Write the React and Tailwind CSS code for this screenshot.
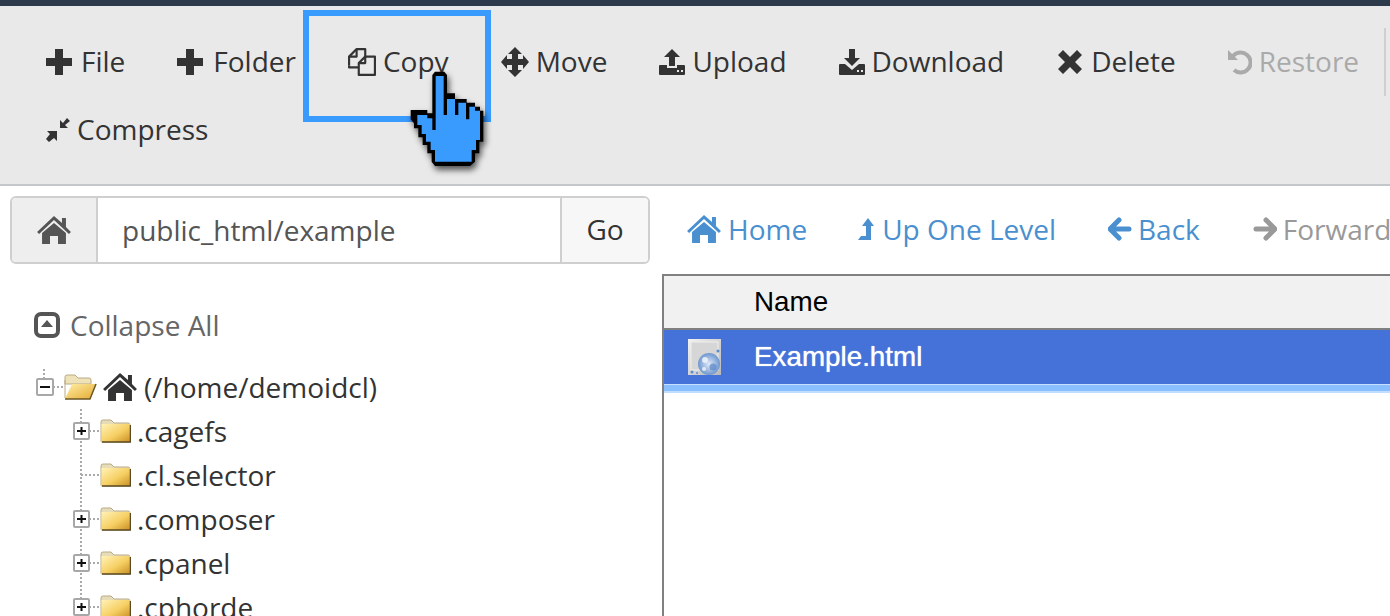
const Plus = () => (
  <svg width="26" height="26" viewBox="0 0 26 26" fill="#333"><path d="M9 0h8v9h9v8h-9v9H9v-9H0V9h9z" /></svg>
);

const Copy = () => (
  <svg width="28" height="28" viewBox="1 1 26 26" fill="none" stroke="#333" strokeWidth="2" strokeLinejoin="round">
    <path d="M2 17V9l7-7h8v7" />
    <path d="M9 2v7H2" />
    <path d="M2 17v2h9" />
    <path d="M11 26V15l6-6h9v17z" fill="#e9e9e9" />
    <path d="M17 9v6h-6" />
  </svg>
);

const Move = () => (
  <svg width="28" height="30" viewBox="0 0 28 30" fill="#333">
    <path d="M14 0L21 7H17V12H22V8L28 15L22 22V18H17V23H21L14 30L7 23H11V18H6V22L0 15L6 8V12H11V7H7Z" />
  </svg>
);

const Upload = () => (
  <svg width="26" height="26" viewBox="0 0 26 26" fill="#333">
    <path d="M13 0l8 8h-5v9h-6V8H5z" />
    <path d="M1 16h7v3h10v-3h7a1 1 0 0 1 1 1v8a1 1 0 0 1-1 1H1a1 1 0 0 1-1-1v-8a1 1 0 0 1 1-1z" />
    <rect x="18" y="21" width="2" height="2" fill="#e9e9e9" />
    <rect x="22" y="21" width="2" height="2" fill="#e9e9e9" />
  </svg>
);

const Download = () => (
  <svg width="26" height="26" viewBox="0 0 26 26" fill="#333">
    <path d="M10 0h6v9h5l-8 8-8-8h5z" />
    <path d="M1 15h5l7 6 7-6h5a1 1 0 0 1 1 1v9a1 1 0 0 1-1 1H1a1 1 0 0 1-1-1v-9a1 1 0 0 1 1-1z" />
    <rect x="18" y="21" width="2" height="2" fill="#e9e9e9" />
    <rect x="22" y="21" width="2" height="2" fill="#e9e9e9" />
  </svg>
);

const Times = () => (
  <svg width="24" height="24" viewBox="0 0 24 24" fill="#333">
    <path d="M5 0l7 7 7-7 5 5-7 7 7 7-5 5-7-7-7 7-5-5 7-7-7-7z" />
  </svg>
);

const Restore = () => (
  <svg width="24" height="26" viewBox="0 0 24 26" fill="none">
    <path d="M5 7a10 10 0 1 1 1 14" stroke="#aaa" strokeWidth="4" />
    <path d="M0 1l10 10H0z" fill="#aaa" />
  </svg>
);

const Compress = () => (
  <svg width="24" height="24" viewBox="0 0 24 24" fill="#333">
    <path d="M14 2v8h8l-3-3 5-4-3-3-4 5z" />
    <path d="M1 13h10v10l-3-3-5 4-3-3 4-5z" />
  </svg>
);

const Home = ({ color, w = 34 }) => (
  <svg width={w} height={w * 0.82} viewBox="0 0 34 28" fill={color} className="shrink-0">
    <path d="M17 0l8 7V2h4v9l5 5-2 2L17 4 2 18l-2-2z" />
    <path d="M5 17L17 7l12 10v11h-8v-8h-8v8H5z" />
  </svg>
);

const UpLevel = () => (
  <svg width="16" height="22" viewBox="0 0 16 22" fill="#4a90d0">
    <path d="M10 0L16 8H13V22H0L3 18H8V8H4Z" />
  </svg>
);

const Arrow = ({ color, flip }) => (
  <svg width="24" height="24" viewBox="0 0 24 24" fill="none" stroke={color} strokeWidth="5" strokeLinecap="round" strokeLinejoin="round">
    {flip ? <path d="M13 3l9 9-9 9M21 12H3" /> : <path d="M11 3l-9 9 9 9M3 12h18" />}
  </svg>
);

const Collapse = () => (
  <svg width="26" height="26" viewBox="0 0 26 26">
    <rect x="2" y="2" width="22" height="22" rx="5" fill="#fff" stroke="#555" strokeWidth="4" />
    <path d="M13 8l6 7H7z" fill="#555" />
  </svg>
);

const Folder = ({ id }) => (
  <svg width="31" height="24" viewBox="0 0 31 24" className="shrink-0">
    <defs>
      <linearGradient id={id} x1="0" y1="0" x2="1" y2="1">
        <stop offset="0" stopColor="#fff3b8" />
        <stop offset="0.55" stopColor="#f6cf62" />
        <stop offset="1" stopColor="#c98f25" />
      </linearGradient>
    </defs>
    <path d="M1 3q0-2 2-2h8l3 3h14q2 0 2 2v16q0 1-1 1H2q-1 0-1-1z" fill="#e7dcb8" stroke="#b9ab85" strokeWidth="1" />
    <rect x="1.5" y="5" width="28.5" height="18" fill={`url(#${id})`} />
    <path d="M2 23h28.5V6" fill="none" stroke="#5a4a25" strokeWidth="1.5" />
  </svg>
);

const OpenFolder = () => (
  <svg width="33" height="26" viewBox="0 0 33 26" className="shrink-0">
    <defs>
      <linearGradient id="openF" x1="0" y1="0" x2="1" y2="1">
        <stop offset="0" stopColor="#fff0a8" />
        <stop offset="1" stopColor="#e5a92f" />
      </linearGradient>
    </defs>
    <path d="M1 3q0-2 2-2h8l3 3h11q2 0 2 2v4H1z" fill="#efe2b8" stroke="#b9ab85" />
    <path d="M1 24V6" stroke="#b9ab85" />
    <path d="M8 10h24l-6 15H1z" fill="url(#openF)" />
    <path d="M1 25h25l6-15" fill="none" stroke="#6a5526" strokeWidth="1.5" />
  </svg>
);

// expander box plus the dotted tree lines for one 44px row
const Connector = ({ kind }) => (
  <svg width="27" height="44" viewBox="0 0 27 44" className="shrink-0">
    <path d={kind === "leaf" ? "M8 0V44M8 22H27" : "M8 0V44M16 22H27"} stroke="#aaa" strokeWidth="2" strokeDasharray="2 2" fill="none" />
    {kind !== "leaf" && (
      <g>
        <rect x="1" y="14" width="15" height="16" rx="1" fill="#fff" stroke="#a8a8a8" strokeWidth="2" />
        <path d="M4 22h9M8.5 18v8" stroke="#111" strokeWidth="2" />
      </g>
    )}
  </svg>
);

const FileIcon = () => (
  <svg width="35" height="36" viewBox="0 0 35 36" className="shrink-0">
    <defs>
      <linearGradient id="doc" x1="0" y1="0" x2="1" y2="1">
        <stop offset="0" stopColor="#f2f2f2" />
        <stop offset="1" stopColor="#b8b8b8" />
      </linearGradient>
      <radialGradient id="globe">
        <stop offset="0" stopColor="#dfe9f7" />
        <stop offset="1" stopColor="#6f97cf" />
      </radialGradient>
    </defs>
    <rect x="0" y="0" width="33" height="36" fill="url(#doc)" />
    <rect x="3" y="3" width="27" height="28" fill="#d6d6d6" stroke="#eee" />
    <circle cx="21" cy="25" r="11" fill="url(#globe)" />
    <circle cx="17" cy="21" r="3" fill="#f4f7fc" opacity="0.8" />
    <circle cx="25" cy="28" r="3.5" fill="#5b88c8" opacity="0.7" />
    <circle cx="16" cy="30" r="2" fill="#fff" opacity="0.7" />
    <circle cx="4" cy="33" r="1.5" fill="#5b8bd0" />
    <circle cx="9" cy="34" r="1" fill="#5b8bd0" />
    <circle cx="30" cy="12" r="1.5" fill="#5b8bd0" />
  </svg>
);

const Cursor = () => (
  <svg width="100" height="120" viewBox="0 0 300 360" className="drop-shadow-[2px_4px_3px_rgba(0,0,0,0.65)]">
    <path d="M97 45L105 35H133L141 45V100H165V117H200V128H225V140H240V152H250V245H238V280H225V305L210 318H105L95 305V280H82V255H68V232H55V205H42V190L32 178V150H82V160H97Z" fill="#000" />
    <path d="M107 48H131V165H141V117H165V165H175V128H198V178H208V140H225V152H240V240H228V270H215V305H105V270H92V245H78V222H65V195H52V165H82V175H97V210H107Z" fill="#3a9bff" />
  </svg>
);

const toolbarItems = [
  { label: "File", icon: <Plus />, cls: "gap-[9px]" },
  { label: "Folder", icon: <Plus />, cls: "gap-[10px]" },
  { label: "Copy", icon: <Copy />, cls: "gap-[7px]" },
  { label: "Move", icon: <Move />, cls: "gap-[7px]" },
  { label: "Upload", icon: <Upload />, cls: "gap-[7px]" },
  { label: "Download", icon: <Download />, cls: "gap-[7px]" },
  { label: "Delete", icon: <Times />, cls: "ml-[2px] gap-[9px]" },
  { label: "Restore", icon: <Restore />, cls: "gap-[7px] text-[#aaa]" },
];

const treeRows = [
  { name: ".cagefs", kind: "plus" },
  { name: ".cl.selector", kind: "leaf" },
  { name: ".composer", kind: "plus" },
  { name: ".cpanel", kind: "plus" },
  { name: ".cphorde", kind: "plus" },
];

export default function App() {
  return (
    <div className="relative h-[616px] w-[1390px] overflow-hidden bg-white font-['Open_Sans',sans-serif] text-[28px] text-[#333]">
      <div className="h-[6px] bg-[#2c3a4c]" />

      {/* Toolbar */}
      <div className="flex flex-wrap gap-x-[52px] border-b-2 border-[#c4c7c9] bg-[#e9e9e9] pb-[20px] pl-[46px] pt-[22px]">
        {toolbarItems.map((item) => (
          <div key={item.label} className={`flex h-[68px] items-center ${item.cls}`}>
            {item.icon}
            <span className="pb-[2px]">{item.label}</span>
          </div>
        ))}
        <div className="ml-[-27px] h-[68px] w-[2px] bg-[#cfcfcf]" />
        <div className="flex h-[68px] items-center gap-[7px]">
          <Compress />
          <span className="pb-[2px]">Compress</span>
        </div>
      </div>

      <div className="flex h-[430px]">
        {/* Left pane */}
        <div className="w-[662px] shrink-0 pl-[10px] pt-[10px]">
          <div className="flex h-[68px] w-[640px] overflow-hidden rounded-[6px] border-2 border-[#cfcfcf]">
            <div className="flex w-[86px] items-center justify-center border-r-2 border-[#cfcfcf] bg-[#eeeeee]">
              <Home color="#555" />
            </div>
            <div className="flex flex-1 items-center pl-[24px] text-[#555]">public_html/example</div>
            <div className="flex w-[88px] items-center justify-center border-l-2 border-[#cfcfcf] bg-[#f7f7f7] pb-[2px]">Go</div>
          </div>

          <div className="mt-[40px] flex items-center gap-[10px] pl-[24px] text-[#666]">
            <Collapse />
            <span>Collapse All</span>
          </div>

          <div className="mt-[19px] flex h-[44px] items-center pl-[26px]">
            <svg width="28" height="44" viewBox="0 0 28 44" className="shrink-0">
              <path d="M8 4V14M17 22H27" stroke="#aaa" strokeWidth="2" strokeDasharray="2 2" />
              <rect x="1" y="14" width="16" height="16" rx="1" fill="#fff" stroke="#a8a8a8" strokeWidth="2" />
              <path d="M4 22h10" stroke="#111" strokeWidth="2" />
            </svg>
            <OpenFolder />
            <span className="ml-[6px]"><Home color="#333" /></span>
            <span className="ml-[7px]">(/home/demoidcl)</span>
          </div>

          {treeRows.map((row, i) => (
            <div key={row.name} className="flex h-[44px] items-center pl-[63px]">
              <Connector kind={row.kind} />
              <Folder id={`folder${i}`} />
              <span className="ml-[6px]">{row.name}</span>
            </div>
          ))}
        </div>

        {/* Right pane */}
        <div className="flex min-w-0 flex-1 flex-col">
          <div className="flex h-[88px] items-center whitespace-nowrap pb-[2px] pl-[25px] text-[#4a90d0]">
            <Home color="#4a90d0" />
            <span className="ml-[7px]">Home</span>
            <span className="ml-[51px]"><UpLevel /></span>
            <span className="ml-[8px]">Up One Level</span>
            <span className="ml-[52px]"><Arrow color="#4a90d0" /></span>
            <span className="ml-[6px]">Back</span>
            <span className="ml-[53px]"><Arrow color="#999" flip /></span>
            <span className="ml-[6px] text-[#999]">Forward</span>
          </div>

          <div className="flex-1 border-l-2 border-t-2 border-[#808080] font-['Liberation_Sans',sans-serif] text-[27.8px]">
            <div className="flex h-[54px] items-center border-b-2 border-[#808080] bg-[#f1f1f1] pl-[90px] text-black">Name</div>
            <div className="flex h-[54px] items-center bg-[#4472d8] pl-[24px] text-white">
              <FileIcon />
              <span className="ml-[31px] [text-shadow:0_0_1px_#fff]">Example.html</span>
            </div>
            <div className="h-[1px] bg-[#c8e0ff]" />
            <div className="h-[6px] bg-[#8abfff]" />
            <div className="h-[2px] bg-[#c0deff]" />
          </div>
        </div>
      </div>

      {/* Highlight around Copy, with the pointer on top */}
      <div className="absolute left-[303px] top-[10px] h-[112px] w-[188px] border-[6px] border-[#3a9bff]" />
      <div className="absolute left-[400px] top-[60px]">
        <Cursor />
      </div>
    </div>
  );
}
